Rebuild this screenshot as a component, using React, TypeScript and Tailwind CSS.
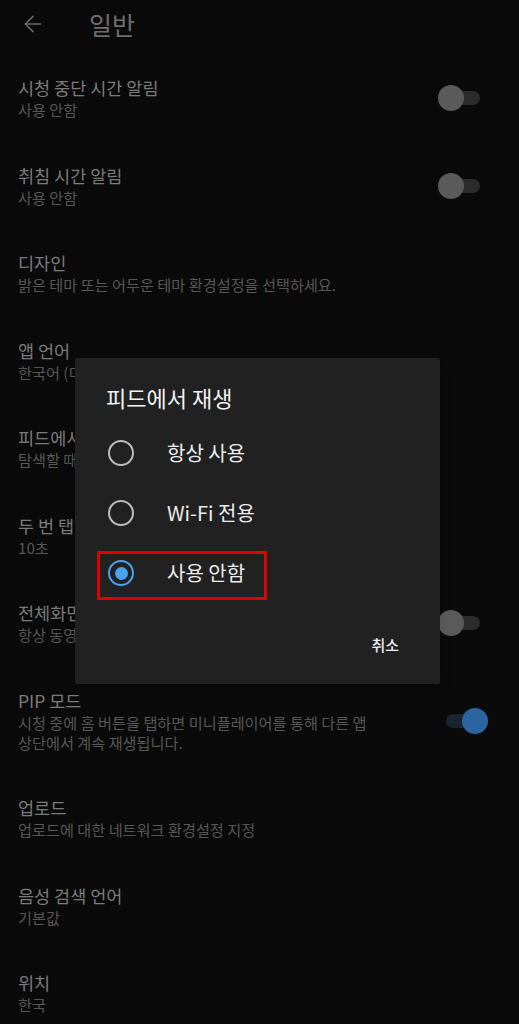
import { ArrowLeft } from "lucide-react";

type Item = {
  title: string;
  sub: string[];
  toggle?: "off" | "on";
};

const items: Item[] = [
  { title: "시청 중단 시간 알림", sub: ["사용 안함"], toggle: "off" },
  { title: "취침 시간 알림", sub: ["사용 안함"], toggle: "off" },
  { title: "디자인", sub: ["밝은 테마 또는 어두운 테마 환경설정을 선택하세요."] },
  { title: "앱 언어", sub: ["한국어 (디바이스 언어)"] },
  { title: "피드에서 재생", sub: ["탐색할 때 동영상 재생"] },
  { title: "두 번 탭하여 탐색", sub: ["10초"] },
  { title: "전체화면으로 확대", sub: ["항상 동영상을 전체화면으로 확대"], toggle: "off" },
  {
    title: "PIP 모드",
    sub: [
      "시청 중에 홈 버튼을 탭하면 미니플레이어를 통해 다른 앱",
      "상단에서 계속 재생됩니다.",
    ],
    toggle: "on",
  },
  { title: "업로드", sub: ["업로드에 대한 네트워크 환경설정 지정"] },
  { title: "음성 검색 언어", sub: ["기본값"] },
  { title: "위치", sub: ["한국"] },
];

const font = { fontFamily: '"Noto Sans CJK KR", "Noto Sans", sans-serif' };

function Toggle({ on }: { on: boolean }) {
  return (
    <div className="relative w-[50px] h-[26px] shrink-0">
      <div
        className={
          on
            ? "absolute left-[8px] right-[4px] top-[6px] h-[14px] rounded-full bg-[#1a2430]"
            : "absolute left-[4px] right-[8px] top-[6px] h-[14px] rounded-full bg-[#2c2c2c]"
        }
      />
      <div
        className={
          on
            ? "absolute right-0 top-0 w-[26px] h-[26px] rounded-full bg-[#2b65a0]"
            : "absolute left-0 top-0 w-[26px] h-[26px] rounded-full bg-[#5a5a5a]"
        }
      />
    </div>
  );
}

function Radio({ checked }: { checked: boolean }) {
  if (checked) {
    return (
      <div className="w-[26px] h-[26px] rounded-full border-[2.5px] border-[#4aa3f0] flex items-center justify-center">
        <div className="w-[13px] h-[13px] rounded-full bg-[#4aa3f0]" />
      </div>
    );
  }
  return <div className="w-[26px] h-[26px] rounded-full border-[2.5px] border-[#bdbdbd]" />;
}

export default function App() {
  const options = ["항상 사용", "Wi-Fi 전용", "사용 안함"];

  return (
    <div
      className="relative w-[519px] h-[1024px] overflow-hidden bg-[#0a0a0a]"
      style={font}
    >
      <header className="h-[48px] flex items-center">
        <ArrowLeft className="ml-[20px] text-[#6a6a6a]" size={26} strokeWidth={1.5} />
        <h1 className="ml-[43px] text-[25px] text-[#6e6e6e] leading-none">일반</h1>
      </header>

      <div className="pt-[6px]">
        {items.map((item) => (
          <div
            key={item.title}
            className="flex items-center justify-between pl-[18px] pr-[31px] pt-[23px] pb-[22.5px]"
          >
            <div className="min-w-0">
              <div className="text-[17.5px] leading-[22px] text-[#7b7b7b] whitespace-nowrap">
                {item.title}
              </div>
              {item.sub.map((line) => (
                <div
                  key={line}
                  className="text-[15.2px] leading-[20px] text-[#575757] whitespace-nowrap"
                >
                  {line}
                </div>
              ))}
            </div>
            {item.toggle && <Toggle on={item.toggle === "on"} />}
          </div>
        ))}
      </div>

      <div className="absolute left-[75px] top-[358px] w-[365px] h-[326px] rounded-[2px] bg-[#212121] shadow-lg">
        <h2 className="pl-[31px] pt-[25px] text-[22px] leading-[28px] text-[#f2f2f2]">
          피드에서 재생
        </h2>
        <div className="mt-[12px]">
          {options.map((opt, i) => (
            <div key={opt} className="h-[60px] flex items-center pl-[33px]">
              <Radio checked={i === 2} />
              <span className="ml-[33px] text-[20px] text-[#ececec] leading-none">{opt}</span>
            </div>
          ))}
        </div>
        <div className="mt-[32px] pr-[41px] flex justify-end">
          <span className="text-[15px] leading-[20px] font-medium text-[#ececec]">취소</span>
        </div>

        <div className="absolute left-[22px] top-[193px] w-[170px] h-[49px] border-[3px] border-[#e00000]" />
      </div>
    </div>
  );
}
